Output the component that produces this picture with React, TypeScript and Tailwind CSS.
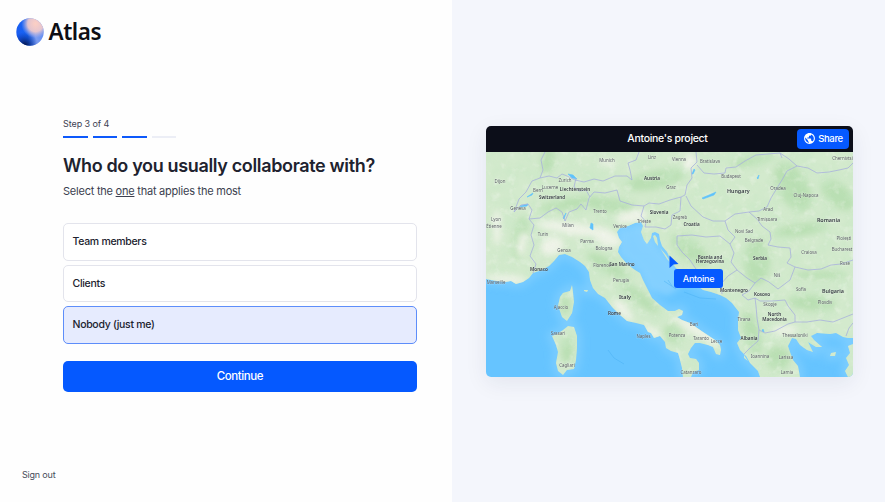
const options = ["Team members", "Clients", "Nobody (just me)"];
const selected = "Nobody (just me)";

const mainland =
  "M486 152H853V338L848 338L843 337L836 333L830 334L817 333L811 336L814 340L822 347L816 347L808 342L811 348L813 352L807 350L800 345L796 339L792 338L788 346L790 352L793 360L798 366L800 377H760L758 371L750 363L746 356L740 350L737 343L741 338L738 330V320L739 312L735 307L732 303L726 298L720 295L711 292L703 290L690 280L680 272L675 267L671 260L667 252L662 246L660 240L659 234L655 232L652 233L651 238L647 244L644 240L641 232L643 226L641 222L635 223L628 226L620 228L617 232L619 238L622 242L619 247L618 252L621 257L627 264L635 270L640 273L643 280L647 288L652 298L660 305L668 311L675 311L679 309L683 311L682 315L677 317L682 320L690 323L703 332L715 340L720 345L721 350L720 355L716 354L713 347L708 345L700 343L695 343L691 348L688 354L690 358L696 359L699 363L699 370L693 372L691 377H683L682 368L680 360L678 353L671 351L666 348L665 342L660 336L654 338L651 333L648 332L644 325L636 323L627 321L620 315L612 307L605 298L598 294L593 288L590 280L589 272L585 266L580 262L572 257L565 254L559 255L554 261L549 266L542 270L533 273L529 278L523 282L516 284L511 281L505 282L497 281L486 279Z";

const islands = [
  "M572 285L573 292L574 302L572 313L567 321L562 317L560 311L558 306L560 297L563 293L570 291Z",
  "M568 326L574 327L577 336L577 348L576 360L574 369L567 370L563 375L558 371L556 363L558 352L556 345L552 336L557 334L563 330Z",
  "M655 235L657 238L658 246L655 242L653 236Z",
  "M660 248L666 255L671 263L667 259Z",
  "M853 344L848 346L850 353L846 358L849 365L845 371L848 377H853Z",
  "M744 355L748 361L744 358Z",
  "M831 353L836 352L835 356L830 356Z",
  "M584 290L588 290L587 292L584 291Z",
];

const borders = [
  "M545 152L541 160L543 170L540 178L549 176L557 178L562 174L567 176L575 180L584 182L594 179L603 181L615 176L627 176L632 180L630 170L628 163L636 160L639 152",
  "M540 178L532 181L526 192L519 199L516 207L514 212L521 205L528 204L532 210L529 219L534 225L531 235L534 245L530 256L536 264L533 273",
  "M529 219L540 218L548 212L556 208L562 212L565 221L569 212L577 209L581 204L586 210L589 198L594 192L605 193L617 190L620 201L632 205L644 206L649 203L659 204L670 200L681 197L685 195L687 185L692 178L691 168L697 162L696 152",
  "M576 178L574 187L579 191L586 190L590 197",
  "M644 206L641 216L646 222L645 227L656 227L665 229L671 225L672 215L680 211L681 197",
  "M697 165L704 173L714 174L725 173L726 168L736 167L745 161L756 155L768 154L780 153L789 159L797 166L787 171L782 180L777 188L771 198L767 207L759 211L749 212L735 214L725 221L713 221L703 217L691 206L686 196",
  "M797 166L808 168L817 173L829 172L839 170L848 168L853 163",
  "M780 153L782 158",
  "M725 221L728 230L735 237L730 244L720 236L706 237L692 235L677 236L677 245L682 252L690 260L696 269L705 278L712 286",
  "M749 212L757 219L762 226L770 232L771 239L768 245L778 247L790 248L791 257L787 263L795 267L808 270L821 269L831 265L841 264L853 260",
  "M730 244L734 253L731 262L737 270L728 276L721 284L722 294",
  "M737 270L747 278L755 283L749 291L742 295L748 300L755 298L760 301L772 301L785 300L788 306L795 315L795 322L807 322L820 320L833 322L843 318L853 314",
  "M755 283L761 278L769 282L778 289L790 280L795 267",
  "M755 298L756 306L757 318L759 330L765 333L775 331L788 324L795 322",
  "M759 330L758 341L750 348L744 354",
  "M853 323L849 328L846 336",
];

const lakes = [
  "M520 206L528 204L527 206L521 207Z",
  "M527 197L533 193L532 195Z",
  "M568 174L573 175L577 179L572 178Z",
  "M591 223L593 224L593 230L590 228Z",
  "M566 213L563 218L564 219Z",
  "M702 198L716 192L714 195L703 199Z",
  "M692 174L694 169L695 170L693 174Z",
  "M757 178L759 175L758 179Z",
  "M763 329L764 332L762 331Z",
];

// Pale lowlands: Po valley, Rhone, Apulia, Pannonian basin, Danube plain
const plains = [
  { cx: 575, cy: 229, rx: 40, ry: 6, rotate: 8 },
  { cx: 607, cy: 238, rx: 15, ry: 8, rotate: 25 },
  { cx: 552, cy: 246, rx: 12, ry: 9, rotate: -20 },
  { cx: 632, cy: 217, rx: 17, ry: 6, rotate: -10 },
  { cx: 497, cy: 227, rx: 4, ry: 18, rotate: 0 },
  { cx: 506, cy: 279, rx: 22, ry: 4, rotate: 5 },
  { cx: 623, cy: 310, rx: 14, ry: 5, rotate: 48 },
  { cx: 653, cy: 332, rx: 10, ry: 4, rotate: 35 },
  { cx: 698, cy: 331, rx: 28, ry: 5, rotate: 32 },
  { cx: 608, cy: 163, rx: 10, ry: 3, rotate: 0 },
  { cx: 690, cy: 162, rx: 6, ry: 9, rotate: 10 },
  { cx: 784, cy: 330, rx: 14, ry: 4, rotate: 0 },
  { cx: 522, cy: 244, rx: 5, ry: 13, rotate: 10 },
];

const forests = [
  { cx: 520, cy: 238, rx: 7, ry: 22, rotate: 10 },
  { cx: 570, cy: 204, rx: 32, ry: 6, rotate: -10 },
  { cx: 655, cy: 180, rx: 30, ry: 9, rotate: -12 },
  { cx: 610, cy: 205, rx: 24, ry: 7, rotate: 5 },
  { cx: 608, cy: 266, rx: 24, ry: 7, rotate: 30 },
  { cx: 640, cy: 298, rx: 24, ry: 6, rotate: 38 },
  { cx: 673, cy: 334, rx: 10, ry: 8, rotate: 40 },
  { cx: 690, cy: 250, rx: 22, ry: 10, rotate: 38 },
  { cx: 793, cy: 187, rx: 15, ry: 27, rotate: -30 },
  { cx: 838, cy: 195, rx: 20, ry: 11, rotate: 40 },
  { cx: 800, cy: 230, rx: 28, ry: 6, rotate: -8 },
  { cx: 757, cy: 262, rx: 13, ry: 23, rotate: 0 },
  { cx: 812, cy: 303, rx: 24, ry: 8, rotate: 5 },
  { cx: 820, cy: 275, rx: 28, ry: 4, rotate: 0 },
  { cx: 752, cy: 333, rx: 8, ry: 23, rotate: -15 },
  { cx: 778, cy: 358, rx: 12, ry: 12, rotate: 0 },
  { cx: 548, cy: 160, rx: 7, ry: 14, rotate: 10 },
  { cx: 565, cy: 305, rx: 5, ry: 10, rotate: 0 },
  { cx: 567, cy: 350, rx: 6, ry: 14, rotate: 0 },
  { cx: 752, cy: 160, rx: 22, ry: 5, rotate: -12 },
];

const countries = [
  { name: "Austria", x: 652, y: 179.5 },
  { name: "Switzerland", x: 552, y: 199 },
  { name: "Liechtenstein", x: 575, y: 190.5 },
  { name: "Slovenia", x: 659, y: 214 },
  { name: "Croatia", x: 691.5, y: 226 },
  { name: "Hungary", x: 738.3, y: 193, large: true },
  { name: "Romania", x: 828.5, y: 222, large: true },
  { name: "Serbia", x: 760, y: 259.5 },
  { name: "Bosnia and", x: 710, y: 258.5 },
  { name: "Herzegovina", x: 710, y: 263 },
  { name: "Montenegro", x: 734, y: 292.3 },
  { name: "Kosovo", x: 762, y: 295.5 },
  { name: "Bulgaria", x: 833, y: 293, large: true },
  { name: "North", x: 774.5, y: 316.3 },
  { name: "Macedonia", x: 774.5, y: 321.3 },
  { name: "Albania", x: 749, y: 340 },
  { name: "Italy", x: 625, y: 299, large: true },
  { name: "San Marino", x: 622, y: 266 },
  { name: "Monaco", x: 539, y: 270.5 },
  { name: "Rome", x: 614.5, y: 315.3 },
];

const cities = [
  { name: "Munich", x: 607, y: 162 },
  { name: "Linz", x: 652, y: 159 },
  { name: "Vienna", x: 679, y: 161.3 },
  { name: "Bratislava", x: 710, y: 163 },
  { name: "Budapest", x: 731, y: 178 },
  { name: "Dijon", x: 500, y: 183 },
  { name: "Zurich", x: 565, y: 182 },
  { name: "Bern", x: 538, y: 192 },
  { name: "Lucerne", x: 550, y: 188.8 },
  { name: "Geneva", x: 518, y: 210 },
  { name: "Graz", x: 671, y: 189 },
  { name: "Lyon", x: 496, y: 220.5 },
  { name: "Étienne", x: 494, y: 228 },
  { name: "Milan", x: 568, y: 227 },
  { name: "Trento", x: 600, y: 213 },
  { name: "Trieste", x: 644, y: 223 },
  { name: "Venice", x: 620, y: 228 },
  { name: "Turin", x: 543, y: 236 },
  { name: "Parma", x: 587, y: 243 },
  { name: "Bologna", x: 604, y: 250 },
  { name: "Genoa", x: 564, y: 252 },
  { name: "Florence", x: 602, y: 267 },
  { name: "Perugia", x: 621, y: 282 },
  { name: "Marseille", x: 496, y: 284 },
  { name: "Ajaccio", x: 561, y: 308.5 },
  { name: "Sassari", x: 558, y: 334.5 },
  { name: "Cagliari", x: 567, y: 367.3 },
  { name: "Naples", x: 643.5, y: 338.3 },
  { name: "Potenza", x: 677, y: 336.5 },
  { name: "Bari", x: 694, y: 326 },
  { name: "Taranto", x: 701, y: 340.3 },
  { name: "Lecce", x: 716.5, y: 342.7 },
  { name: "Catanzaro", x: 691, y: 373.8 },
  { name: "Zagreb", x: 680, y: 218.7 },
  { name: "Oradea", x: 778, y: 189.5 },
  { name: "Cluj-Napoca", x: 806, y: 196.5 },
  { name: "Chernivtsi", x: 842.5, y: 159.5 },
  { name: "Arad", x: 768, y: 211 },
  { name: "Timișoara", x: 767, y: 221 },
  { name: "Novi Sad", x: 744, y: 232.5 },
  { name: "Belgrade", x: 754, y: 242.3 },
  { name: "Ploiești", x: 844, y: 240 },
  { name: "Bucharest", x: 842, y: 251 },
  { name: "Craiova", x: 809, y: 254 },
  { name: "Niš", x: 777, y: 277 },
  { name: "Ruse", x: 845, y: 265 },
  { name: "Sofia", x: 801, y: 291 },
  { name: "Plovdiv", x: 825, y: 303.7 },
  { name: "Skopje", x: 770, y: 306.3 },
  { name: "Tirana", x: 744, y: 321.3 },
  { name: "Thessaloniki", x: 795, y: 336.7 },
  { name: "Ioannina", x: 760, y: 357.7 },
  { name: "Larissa", x: 786, y: 358.7 },
  { name: "Lamia", x: 787, y: 374 },
];

function ProjectMap() {
  return (
    <svg viewBox="486 152 367 225" preserveAspectRatio="none" className="block h-[225px] w-full">
      <defs>
        <filter id="soft" x="-50%" y="-50%" width="200%" height="200%">
          <feGaussianBlur stdDeviation="3" />
        </filter>
        <filter id="coast" x="-10%" y="-10%" width="120%" height="120%">
          <feGaussianBlur stdDeviation="4" />
        </filter>
        <filter id="relief" x="0" y="0" width="100%" height="100%">
          <feTurbulence type="fractalNoise" baseFrequency="0.06" numOctaves="4" seed="8" />
          <feColorMatrix values="0 0 0 0 0.58  0 0 0 0 0.8  0 0 0 0 0.56  2.4 0 0 0 -0.9" />
        </filter>
        <filter id="peaks" x="0" y="0" width="100%" height="100%">
          <feTurbulence type="fractalNoise" baseFrequency="0.12" numOctaves="3" seed="21" />
          <feColorMatrix values="0 0 0 0 0.94  0 0 0 0 0.96  0 0 0 0 0.91  0 3 0 0 -1.6" />
        </filter>
        <clipPath id="land">
          <path d={mainland} />
          {islands.map((d) => (
            <path key={d} d={d} />
          ))}
        </clipPath>
      </defs>

      {/* Sea */}
      <rect x="486" y="152" width="367" height="225" fill="#66c4ff" />
      <g fill="none" stroke="#8ad3ff" strokeWidth="8" opacity="0.65" filter="url(#coast)">
        <path d={mainland} />
        {islands.map((d) => (
          <path key={d} d={d} />
        ))}
      </g>
      <path d="M618 230L642 224L660 250L690 280L668 296L650 290L640 271L620 255Z" fill="#8bd3ff" opacity="0.8" filter="url(#soft)" />
      <path d="M608 350L614 358L624 364M664 281L670 285L676 289M668 280L672 286M684 292L700 298L716 299" fill="none" stroke="#48aef3" strokeWidth="0.8" opacity="0.6" />

      {/* Land */}
      <g clipPath="url(#land)">
        <rect x="486" y="152" width="367" height="225" fill="#d3eacd" />
        <g fill="#a9d8a2" opacity="0.6" filter="url(#soft)">
          {forests.map((f) => (
            <ellipse key={`${f.cx}-${f.cy}`} cx={f.cx} cy={f.cy} rx={f.rx} ry={f.ry} transform={`rotate(${f.rotate} ${f.cx} ${f.cy})`} />
          ))}
        </g>
        <rect x="486" y="152" width="367" height="225" filter="url(#relief)" opacity="0.5" />
        <g fill="#f3f4ec" opacity="0.85" filter="url(#soft)">
          {plains.map((p) => (
            <ellipse key={`${p.cx}-${p.cy}`} cx={p.cx} cy={p.cy} rx={p.rx} ry={p.ry} transform={`rotate(${p.rotate} ${p.cx} ${p.cy})`} />
          ))}
        </g>
        <rect x="486" y="152" width="367" height="225" filter="url(#peaks)" opacity="0.3" />
      </g>
      <g fill="#5fc2fb">
        {lakes.map((d) => (
          <path key={d} d={d} stroke="#5fc2fb" strokeWidth="0.6" />
        ))}
      </g>
      <g fill="none" stroke="#a5addd" strokeWidth="0.75" strokeLinejoin="round">
        {borders.map((d) => (
          <path key={d} d={d} />
        ))}
      </g>

      {/* Labels */}
      <g textAnchor="middle" fontFamily="'Noto Sans', sans-serif" paintOrder="stroke" stroke="#ffffff" strokeOpacity="0.35" strokeWidth="0.6">
        {cities.map((city) => (
          <text key={city.name} x={city.x} y={city.y} fontSize="4.4" fill="#565b60">
            {city.name}
          </text>
        ))}
        {countries.map((country) => (
          <text key={country.name} x={country.x} y={country.y} fontSize={country.large ? 5.4 : 4.6} fontWeight="600" fill="#343a40">
            {country.name}
          </text>
        ))}
      </g>
    </svg>
  );
}

function GlobeIcon() {
  return (
    <svg viewBox="0 0 24 24" className="size-[13px]" fill="#ffffff">
      <path d="M12 2C6.48 2 2 6.48 2 12s4.48 10 10 10 10-4.48 10-10S17.52 2 12 2zm-1 17.93c-3.95-.49-7-3.85-7-7.93 0-.62.08-1.21.21-1.79L9 15v1c0 1.1.9 2 2 2v1.93zm6.9-2.54c-.26-.81-1-1.39-1.9-1.39h-1v-3c0-.55-.45-1-1-1H8v-2h2c.55 0 1-.45 1-1V7h2c1.1 0 2-.9 2-2v-.41c2.93 1.19 5 4.06 5 7.41 0 2.08-.8 3.97-2.1 5.39z" />
    </svg>
  );
}

export default function App() {
  return (
    <div className="flex h-[502px] w-[885px] overflow-hidden bg-[#fefefe] font-['Inter',sans-serif] text-[#20222e]">
      {/* Form */}
      <section className="flex w-[452px] flex-col">
        <header className="flex h-[64px] items-center gap-[5px] pl-[15.5px]">
          <svg viewBox="0 0 28 28" className="size-[28px]">
            <defs>
              <linearGradient id="globe" x1="0" y1="0.6" x2="1" y2="0.5">
                <stop offset="0" stopColor="#1a5cf0" />
                <stop offset="0.4" stopColor="#1765f5" />
                <stop offset="0.7" stopColor="#7c9cf0" />
                <stop offset="1" stopColor="#5f8cf2" />
              </linearGradient>
              <radialGradient id="glow" cx="0.7" cy="0.2" r="0.52">
                <stop offset="0" stopColor="#fccfc4" />
                <stop offset="0.55" stopColor="#f3cbcb" stopOpacity="0.9" />
                <stop offset="1" stopColor="#b9b6e6" stopOpacity="0" />
              </radialGradient>
              <radialGradient id="shade" cx="0.3" cy="1" r="0.5">
                <stop offset="0" stopColor="#04103a" />
                <stop offset="1" stopColor="#052a9e" stopOpacity="0" />
              </radialGradient>
            </defs>
            <circle cx="14" cy="14" r="13.7" fill="url(#globe)" />
            <circle cx="14" cy="14" r="13.7" fill="url(#shade)" />
            <circle cx="14" cy="14" r="13.7" fill="url(#glow)" />
          </svg>
          <span className="pt-px font-['Noto_Sans',sans-serif] text-[22.5px] leading-none font-semibold tracking-[-0.45px] text-[#0d0e14]">Atlas</span>
        </header>

        <main className="ml-[63px] flex w-[354px] flex-col pt-[54px]">
          <p className="text-[9px] leading-3 tracking-[-0.08px] text-[#3d4152]">Step 3 of 4</p>
          <div className="mt-[6px] flex gap-[5px]">
            <span className="h-[2px] w-[24.5px] bg-[#0d59fb]" />
            <span className="h-[2px] w-[24.5px] bg-[#0d59fb]" />
            <span className="h-[2px] w-[24.5px] bg-[#0d59fb]" />
            <span className="h-[2px] w-[24.5px] bg-[#eceef6]" />
          </div>
          <h1 className="mt-[16px] text-[18px] leading-6 font-semibold tracking-[-0.35px] whitespace-nowrap">Who do you usually collaborate with?</h1>
          <p className="mt-[5px] text-[11px] leading-4 tracking-[-0.23px] text-[#3b3f4f]">
            Select the <span className="underline underline-offset-1">one</span> that applies the most
          </p>

          <div className="mt-[24px] flex flex-col gap-1">
            {options.map((option) => (
              <button
                key={option}
                className={`flex h-[37.5px] items-center rounded-[5px] border px-[8.5px] pt-px text-[10.5px] font-medium tracking-[-0.3px] ${
                  option === selected ? "border-[#5d8dfa] bg-[#e6ebfe]" : "border-[#e3e4ec] bg-white"
                }`}
              >
                {option}
              </button>
            ))}
          </div>
          <button className="mt-[17px] h-[31px] rounded-[5px] bg-[#0559ff] pt-px text-[11.5px] font-medium tracking-[-0.42px] text-white">Continue</button>
        </main>

        <a className="mt-auto mb-[21px] ml-[22px] text-[9px] leading-3 tracking-[-0.2px] text-[#474c5a]">Sign out</a>
      </section>

      {/* Preview */}
      <section className="flex flex-1 items-center justify-center bg-[#f4f6fc] pl-[2px]">
        <div className="relative w-[367px] overflow-hidden rounded-[5px] shadow-[0_6px_22px_rgba(30,40,80,0.08)]">
          <div className="grid h-[26px] grid-cols-[1fr_auto_1fr] items-center bg-[#0c0e19] pr-1 text-white">
            <span className="col-start-2 text-[10.5px] font-medium tracking-[-0.3px]">Antoine's project</span>
            <button className="flex h-[20px] w-[52px] items-center justify-center gap-[2px] justify-self-end rounded-[4px] bg-[#0559ff] text-[9.5px] font-medium tracking-[-0.35px]">
              <GlobeIcon />
              <span className="pt-px">Share</span>
            </button>
          </div>
          <ProjectMap />

          {/* Collaborator cursor */}
          <svg viewBox="0 0 10 14" className="absolute top-[129px] left-[183px] h-[14px] w-[10px]">
            <path d="M0.5 0.5L9.5 9L4.5 9.5L0.5 13Z" fill="#0559ff" />
          </svg>
          <span className="absolute top-[143.5px] left-[188px] flex h-[19px] w-[49px] items-center justify-center rounded-[3px] bg-[#0559ff] text-[9px] font-medium tracking-[-0.25px] text-white">
            Antoine
          </span>
        </div>
      </section>
    </div>
  );
}
